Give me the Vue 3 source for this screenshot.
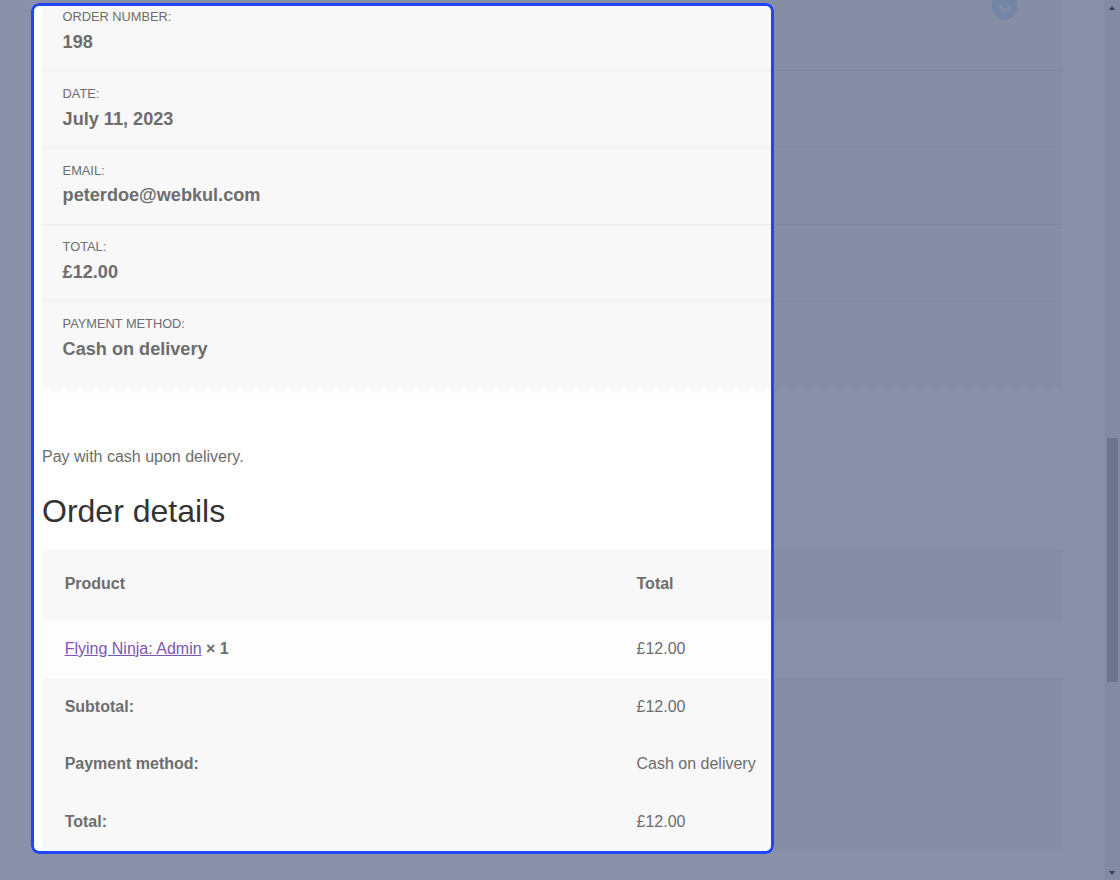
<script setup>
const overview = [
  { label: 'Order number:', value: '198' },
  { label: 'Date:', value: 'July 11, 2023' },
  { label: 'Email:', value: 'peterdoe@webkul.com' },
  { label: 'Total:', value: '£12.00' },
  { label: 'Payment method:', value: 'Cash on delivery' },
]
const totals = [
  { label: 'Subtotal:', value: '£12.00' },
  { label: 'Payment method:', value: 'Cash on delivery' },
  { label: 'Total:', value: '£12.00' },
]
</script>

<template>
  <div class="page">
    <main class="content">
      <div class="overview-wrap">
        <ul class="overview">
          <li v-for="item in overview" :key="item.label" class="overview-row">
            <span class="overview-label">{{ item.label }}</span>
            <strong class="overview-value">{{ item.value }}</strong>
          </li>
        </ul>
        <div class="badge" aria-hidden="true">
          <svg width="14" height="9" viewBox="0 0 14 9">
            <path d="M1.5 1.5L7 7l5.5-5.5" fill="none" stroke="#f4f4f4" stroke-width="3.5" />
          </svg>
        </div>
      </div>
      <svg class="zigzag" width="100%" height="8" aria-hidden="true">
        <defs>
          <pattern id="teeth" width="16" height="8" patternUnits="userSpaceOnUse">
            <polygon points="0,0 16,0 16,6 14,8 6,0 0,6" fill="#f8f8f8" />
          </pattern>
        </defs>
        <rect width="100%" height="8" fill="url(#teeth)" />
      </svg>
      <p class="note">Pay with cash upon delivery.</p>
      <h2 class="heading">Order details</h2>
      <table class="details">
        <thead>
          <tr>
            <th class="col-product">Product</th>
            <th>Total</th>
          </tr>
        </thead>
        <tbody>
          <tr class="line">
            <td><a href="#" class="link">Flying Ninja: Admin</a> <strong>× 1</strong></td>
            <td>£12.00</td>
          </tr>
        </tbody>
        <tfoot>
          <tr v-for="row in totals" :key="row.label">
            <th>{{ row.label }}</th>
            <td>{{ row.value }}</td>
          </tr>
        </tfoot>
      </table>
    </main>
    <div class="scrollbar" aria-hidden="true">
      <span class="arrow arrow-up"></span>
      <div class="track"><div class="thumb"></div></div>
      <span class="arrow arrow-down"></span>
    </div>
    <div class="spotlight" aria-hidden="true"></div>
  </div>
</template>

<style scoped>
.page {
  position: relative;
  display: flex;
  height: 880px;
  overflow: hidden;
  background: #fff;
  color: #6d6d6d;
  font-family: "Liberation Sans", Arial, sans-serif;
  font-size: 16px;
  line-height: 25.6px;
}
.content {
  flex: 1;
  min-width: 0;
  padding: 0 42px;
}
.overview-wrap {
  position: relative;
  margin-top: -5.8px;
}
.overview {
  list-style: none;
  margin: 0;
  padding: 0;
  background: #f8f8f8;
}
.overview-row {
  display: flex;
  flex-direction: column;
  padding: 11.8px 20.6px 0;
  height: 76.8px;
  box-sizing: border-box;
  border-bottom: 1px dotted #e2e2e2;
}
.overview-row:last-child {
  border-bottom: 0;
  height: 85.9px;
}
.overview-label {
  font-size: 12.8px;
  line-height: 21.7px;
  text-transform: uppercase;
}
.overview-value {
  font-size: 18.12px;
  line-height: 29px;
}
.badge {
  position: absolute;
  top: 0;
  right: 46px;
  width: 25px;
  height: 25.8px;
  display: flex;
  align-items: center;
  justify-content: center;
  padding-top: 5.3px;
  box-sizing: border-box;
  background: #cfe3f8;
  border-radius: 0 0 12.5px 12.5px;
}
.zigzag {
  display: block;
}
.note {
  margin: 48.8px 0 0;
}
.heading {
  margin: 18px 0 0;
  font-size: 32px;
  font-weight: 400;
  line-height: 46px;
  color: #333;
}
.details {
  width: 100%;
  margin-top: 15px;
  border-collapse: collapse;
  table-layout: fixed;
}
.details th,
.details td {
  padding: 16px 22.65px;
  text-align: left;
  font-weight: 400;
}
.details th {
  font-weight: 700;
}
.details thead th {
  padding: 22.65px;
  line-height: 26px;
  background: #f8f8f8;
}
.col-product {
  width: 526.6px;
}
.line td {
  background: #fdfdfd;
}
.details tfoot th,
.details tfoot td {
  background: #f8f8f8;
}
.link {
  color: #7f54b3;
}
.scrollbar {
  flex: none;
  width: 15px;
  display: flex;
  flex-direction: column;
  background: #f1f1f1;
  box-shadow: inset 1px 0 0 #e6e6e6;
}
.arrow {
  flex: none;
  width: 0;
  height: 0;
  margin: 6px 4px 5px;
  border-left: 3.5px solid transparent;
  border-right: 3.5px solid transparent;
}
.arrow-up {
  border-bottom: 4px solid #404040;
}
.arrow-down {
  border-top: 4px solid #404040;
}
.track {
  flex: 1;
  padding: 423px 2px 183px;
  box-sizing: border-box;
}
.thumb {
  height: 100%;
  background: #bebebe;
}
.spotlight {
  position: absolute;
  left: 31px;
  top: 3px;
  width: 743px;
  height: 851px;
  box-sizing: border-box;
  border: 3px solid #2145f5;
  border-radius: 8px;
  box-shadow: 0 0 0 1300px rgba(48, 61, 102, 0.57);
  pointer-events: none;
}
</style>
